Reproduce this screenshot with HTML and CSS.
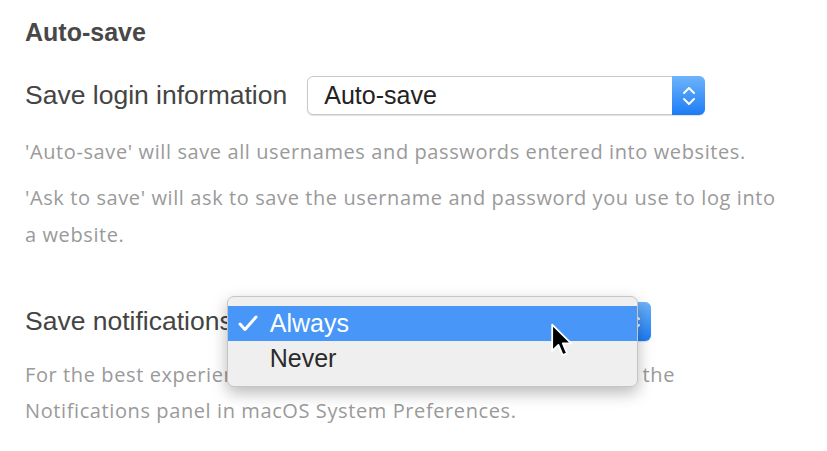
FILE: index.html
```html
<!DOCTYPE html>
<html lang="en">
<head>
<meta charset="utf-8">
<title>Auto-save preferences</title>
<link rel="stylesheet" href="styles.css">
</head>
<body>
<main class="prefs">
  <section class="group">
    <h2 class="group-title">Auto-save</h2>
    <div class="row">
      <span class="row-label">Save login information</span>
      <div class="select">
        <span class="select-value">Auto-save</span>
        <span class="select-btn">
          <svg width="16" height="24" viewBox="0 0 16 24"><path d="M3 9 L8 4 L13 9 M3 15 L8 20 L13 15" fill="none" stroke="#fff" stroke-width="2" stroke-linecap="round" stroke-linejoin="round"/></svg>
        </span>
      </div>
    </div>
    <p class="desc">'Auto-save' will save all usernames and passwords entered into websites.</p>
    <p class="desc">'Ask to save' will ask to save the username and password you use to log into a website.</p>
  </section>

  <section class="group group-notif">
    <div class="row">
      <span class="row-label">Save notifications</span>
      <div class="select select-notif">
        <span class="select-value">Always</span>
        <span class="select-btn">
          <svg width="16" height="24" viewBox="0 0 16 24"><path d="M3 9 L8 4 L13 9 M3 15 L8 20 L13 15" fill="none" stroke="#fff" stroke-width="2" stroke-linecap="round" stroke-linejoin="round"/></svg>
        </span>
        <div class="menu">
          <div class="menu-item is-selected">
            <span class="menu-check"><svg width="20" height="17" viewBox="0 0 20 17"><path d="M2 9 L7 14.5 L18 2" fill="none" stroke="#fff" stroke-width="3" stroke-linecap="round" stroke-linejoin="round"/></svg></span>Always
          </div>
          <div class="menu-item"><span class="menu-check"></span>Never</div>
        </div>
        <svg class="cursor" width="24" height="36" viewBox="0 0 14 22">
          <path d="M1 1 L1 17 L4.8 13.4 L7.4 19.6 L10 18.5 L7.5 12.5 L12.6 12.5 Z" fill="#000" stroke="#fff" stroke-width="1.1" stroke-linejoin="round"/>
        </svg>
      </div>
    </div>
    <p class="desc">For the best experience, enable notifications for 1Password in the Notifications panel in macOS System Preferences.</p>
  </section>
</main>
</body>
</html>
```

FILE: styles.css
```css
html, body {
  margin: 0;
  padding: 0;
  background: #ffffff;
}

body {
  font-family: "Liberation Sans", Arial, sans-serif;
  color: #444444;
}

.prefs {
  padding: 18px 25px 0 25px;
  width: 760px;
}

.group-title {
  margin: 0;
  font-size: 25px;
  line-height: 29px;
  font-weight: bold;
  color: #484848;
}

.row {
  display: flex;
  align-items: center;
  gap: 20px;
  margin-top: 29px;
  height: 39px;
}

.row-label {
  font-size: 26.5px;
  color: #444444;
  white-space: nowrap;
}

.select {
  position: relative;
  display: flex;
  align-items: center;
  width: 398px;
  height: 39px;
  box-sizing: border-box;
  border: 1px solid #c9c9c9;
  border-radius: 6px;
  background: #ffffff;
  box-shadow: 0 1px 1px rgba(0, 0, 0, 0.12);
}

.select-value {
  flex: 1;
  padding-left: 16px;
  font-size: 25px;
  color: #222222;
}

.select-btn {
  align-self: stretch;
  width: 33px;
  margin: -1px -1px -1px 0;
  display: flex;
  align-items: center;
  justify-content: center;
  border-radius: 0 6px 6px 0;
  background: linear-gradient(#6eb4fb, #1c7cf6);
}

.desc {
  margin: 9px 0 0 0;
  font-family: "Open Sans", "Liberation Sans", sans-serif;
  font-size: 20px;
  letter-spacing: 0.6px;
  line-height: 37px;
  color: #9a9a9a;
  max-width: 755px;
}

.row + .desc {
  margin-top: 18px;
}

.group-notif .row {
  margin-top: 49px;
}

.group-notif .desc {
  margin-top: 16px;
  line-height: 36px;
}

.menu {
  position: absolute;
  left: -27px;
  top: -7px;
  width: 411px;
  box-sizing: border-box;
  padding: 9px 0 10px 0;
  background: #efefef;
  border: 1px solid #c6c6c6;
  border-radius: 7px;
  box-shadow: 0 6px 16px rgba(0, 0, 0, 0.28);
  z-index: 2;
}

.menu-item {
  display: flex;
  align-items: center;
  height: 35px;
  font-size: 25px;
  color: #2a2a2a;
}

.menu-item.is-selected {
  background: #4796f8;
  color: #ffffff;
}

.menu-check {
  display: flex;
  align-items: center;
  width: 32px;
  padding-left: 10px;
}

.cursor {
  position: absolute;
  left: 296px;
  top: 20px;
  z-index: 3;
}
```
